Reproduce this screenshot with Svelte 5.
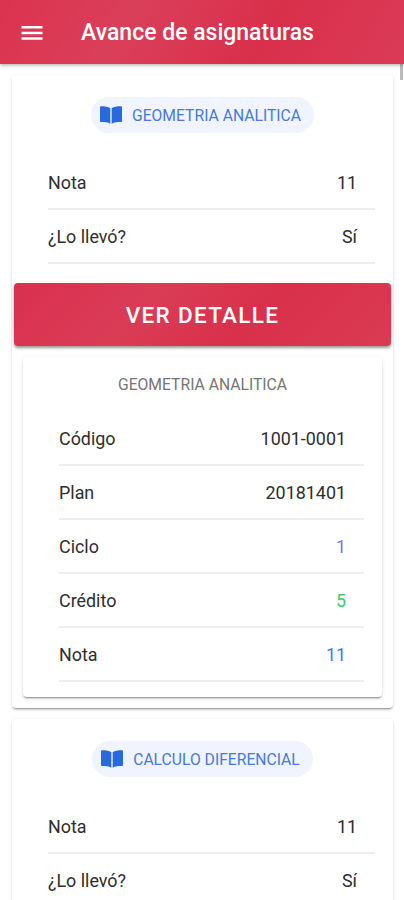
<script lang="ts">
	type Row = { label: string; value: string; color?: string };
	type Course = { name: string; summary: Row[]; details: Row[]; open: boolean };

	let courses: Course[] = $state([
		{
			name: 'GEOMETRIA ANALITICA',
			summary: [
				{ label: 'Nota', value: '11' },
				{ label: '¿Lo llevó?', value: 'Sí' }
			],
			details: [
				{ label: 'Código', value: '1001-0001' },
				{ label: 'Plan', value: '20181401' },
				{ label: 'Ciclo', value: '1', color: 'tertiary' },
				{ label: 'Crédito', value: '5', color: 'success' },
				{ label: 'Nota', value: '11', color: 'primary' }
			],
			open: true
		},
		{
			name: 'CALCULO DIFERENCIAL',
			summary: [
				{ label: 'Nota', value: '11' },
				{ label: '¿Lo llevó?', value: 'Sí' }
			],
			details: [],
			open: false
		}
	]);
</script>

{#snippet list(rows: Row[])}
	<dl>
		{#each rows as row}
			<div class="item">
				<dt>{row.label}</dt>
				<dd class={row.color}>{row.value}</dd>
			</div>
		{/each}
	</dl>
{/snippet}

<div class="page">
	<header>
		<button class="menu" aria-label="Menu">
			<svg viewBox="0 0 22 16" width="22" height="16">
				<path d="M.5 2.200h21M.5 7.900h21M.5 13.600h21" stroke="currentColor" stroke-width="2.500" />
			</svg>
		</button>
		<h1>Avance de asignaturas</h1>
	</header>

	<main>
		{#each courses as course}
			<section class="card">
				<div class="chip">
					<svg viewBox="0 0 22 18" width="22" height="18">
						<path
							d="M10.300 2.200C8.300.9 5 .3 1.200.3.500.3 0 .8 0 1.400v13.500c0 .7.500 1.100 1.200 1.100 3.300 0 6.700.3 9.100 1.700z"
						/>
						<path
							d="M11.700 2.200C13.700.9 17 .3 20.800.3c.7 0 1.200.5 1.200 1.100v13.500c0 .7-.5 1.100-1.200 1.100-3.300 0-6.700.3-9.100 1.700z"
						/>
					</svg>
					<span>{course.name}</span>
				</div>

				{@render list(course.summary)}

				{#if course.details.length}
					<button class="detail" onclick={() => (course.open = !course.open)}>VER DETALLE</button>
				{/if}

				{#if course.open}
					<div class="card inner">
						<h2>{course.name}</h2>
						{@render list(course.details)}
					</div>
				{/if}
			</section>
		{/each}
	</main>

	<div class="scrollbar"></div>
</div>

<style>
	:global(body) {
		margin: 0;
		background: #fff;
		font-family: Roboto, sans-serif;
	}

	.page {
		position: relative;
		display: flex;
		flex-direction: column;
		height: 900px;
		overflow: hidden;
		color: #2e2e2e;
	}

	header {
		display: flex;
		align-items: center;
		flex: none;
		z-index: 1;
		box-sizing: border-box;
		height: 64px;
		padding: 1px 21px 0;
		gap: 38px;
		background: linear-gradient(120deg, #db334f 0%, #da3f59 32%, #d92f4b 65%, #da3b57 100%);
		box-shadow: 0 1px 4px rgba(0, 0, 0, 0.35);
		color: #fff;
	}

	button {
		border: 0;
		font-family: inherit;
		color: #fff;
	}

	.menu {
		display: flex;
		padding: 0;
		background: none;
	}

	h1 {
		margin: 0;
		font-size: 23px;
		font-weight: 500;
	}

	main {
		flex: 1;
		min-height: 0;
		padding: 11px 11px 0 12px;
		overflow: hidden;
	}

	.card {
		display: flex;
		flex-direction: column;
		box-sizing: border-box;
		height: 633px;
		margin-bottom: 11px;
		padding-top: 22px;
		border-radius: 4px;
		background: #fff;
		box-shadow:
			0 2px 1px -1px rgba(0, 0, 0, 0.26),
			0 2px 2px rgba(0, 0, 0, 0.12),
			0 1px 4px rgba(0, 0, 0, 0.1);
	}

	.chip {
		display: flex;
		align-items: center;
		align-self: center;
		height: 36px;
		padding: 0 13px 0 9px;
		gap: 10px;
		border-radius: 18px;
		background: #eff4fe;
		color: #4a78dc;
		font-size: 15.7px;
	}

	.chip svg {
		fill: #2a68de;
	}

	.chip span {
		padding-top: 1px;
	}

	dl {
		margin: 23px 18px 0 36px;
	}

	.item {
		display: flex;
		align-items: center;
		justify-content: space-between;
		box-sizing: border-box;
		height: 54px;
		padding-top: 1px;
		padding-right: 18px;
		border-bottom: 2px solid #eee;
		font-size: 17.9px;
	}

	dd {
		margin: 0;
	}

	.tertiary {
		color: #7a74f7;
	}

	.success {
		color: #3bc973;
	}

	.primary {
		color: #3f7be8;
	}

	.detail {
		flex: none;
		height: 63px;
		margin: 19px 2px 0;
		border-radius: 4px;
		background: linear-gradient(135deg, #d9304f 0%, #da3c56 35%, #d9304b 62%, #da3b54 100%);
		box-shadow: 0 2px 3px rgba(0, 0, 0, 0.4);
		font-size: 22.5px;
		font-weight: 500;
		letter-spacing: 1.3px;
	}

	.inner {
		height: 340px;
		margin: 11px 11px 0;
		padding-top: 0;
	}

	h2 {
		margin: 17px 0 0;
		font-size: 15.7px;
		font-weight: 400;
		line-height: 22px;
		text-align: center;
		color: #757575;
	}

	.inner dl {
		margin-top: 16px;
	}

	.scrollbar {
		position: absolute;
		top: 64px;
		right: 1px;
		width: 3px;
		height: 16px;
		background: #bbb;
	}
</style>
